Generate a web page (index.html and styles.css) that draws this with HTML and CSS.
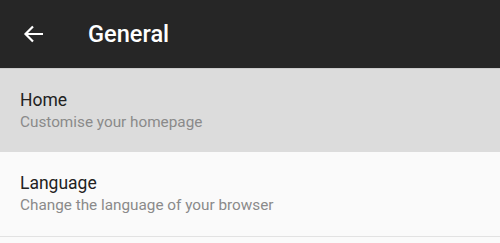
FILE: index.html
```html
<!DOCTYPE html>
<html>
<head>
 <title>General</title>
 <link rel="stylesheet" href="styles.css">
</head>
<body>
 <div class="toolbar">
 <svg class="back" width="24" height="24" viewBox="0 0 24 24">
 <path d="M21 12H3.5M11 4.5L3.5 12l7.5 7.5" fill="none" stroke="#fff" stroke-width="2.2"/>
 </svg>
 <h1>General</h1>
 </div>
 <div class="item selected">
 <div class="title">Home</div>
 <div class="summary">Customise your homepage</div>
 </div>
 <div class="item">
 <div class="title">Language</div>
 <div class="summary">Change the language of your browser</div>
 </div>
</body>
</html>
```

FILE: styles.css
```css
body {
margin: 0;
background-color: #fafafa;
font-family: Roboto, "Noto Sans", sans-serif;
}
.toolbar {
height: 68px;
background-color: #262626;
display: flex;
align-items: center;
padding-left: 22px;
box-sizing: border-box;
}
.back {
display: block;
}
.toolbar h1 {
margin: 0 0 0 42px;
color: #fff;
font-size: 23.6px;
font-weight: 500;
}
.item {
height: 85px;
padding: 0 20px;
box-sizing: border-box;
display: flex;
flex-direction: column;
justify-content: center;
border-bottom: 1px solid #e2e2e2;
}
.item.selected {
height: 84px;
background-color: #dcdcdc;
border-top: 1px solid #cbcbcb;
border-bottom: none;
}
.title {
font-size: 17.5px;
color: #222;
line-height: 22px;
}
.summary {
font-size: 15.3px;
color: #8a8a8a;
line-height: 22px;
}
```
